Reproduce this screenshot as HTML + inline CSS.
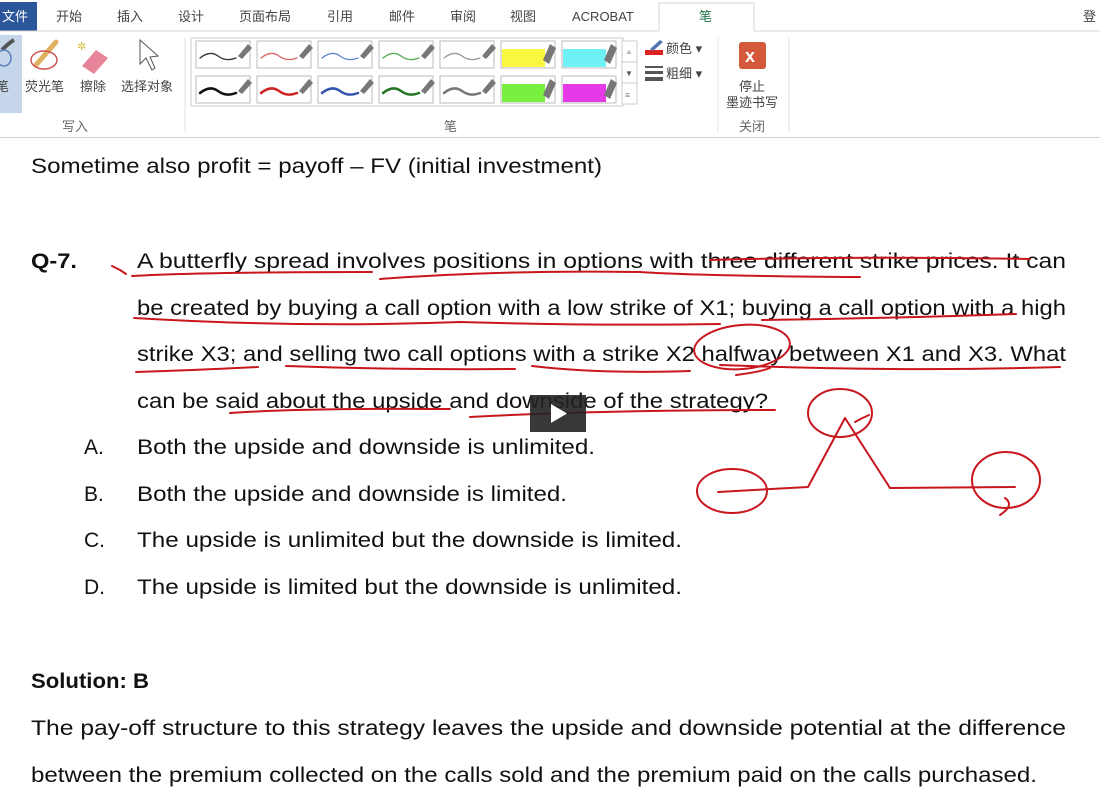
<!DOCTYPE html>
<html><head><meta charset="utf-8"><style>
html,body{margin:0;padding:0;width:1100px;height:790px;overflow:hidden;background:#fff}
svg{display:block}
.t{font-family:"Liberation Sans",sans-serif;font-size:21px;fill:#111}
.b{font-weight:bold}
.cn{font-family:"Liberation Sans","Noto Sans CJK SC",sans-serif;font-size:13px;fill:#444}
.ink{fill:none;stroke:#c8161d;stroke-width:2;stroke-linecap:round;stroke-linejoin:round}
</style></head><body>
<svg width="1100" height="790" viewBox="0 0 1100 790" xmlns="http://www.w3.org/2000/svg">
<rect x="0" y="0" width="1100" height="31" fill="#fff"/>
<rect x="0" y="2" width="37" height="29" fill="#2b579a"/>
<text x="2" y="21" class="cn" style="fill:#fff">文件</text>
<text x="56" y="21" class="cn">开始</text>
<text x="117" y="21" class="cn">插入</text>
<text x="178" y="21" class="cn">设计</text>
<text x="239" y="21" class="cn">页面布局</text>
<text x="327" y="21" class="cn">引用</text>
<text x="389" y="21" class="cn">邮件</text>
<text x="450" y="21" class="cn">审阅</text>
<text x="510" y="21" class="cn">视图</text>
<text x="572" y="21" class="cn">ACROBAT</text>
<path d="M659 31V3H754V31" fill="#fff" stroke="#d4d4d4"/>
<text x="699" y="21" class="cn" style="fill:#217346">笔</text>
<text x="1083" y="21" class="cn">登</text>
<line x1="0" y1="31" x2="659" y2="31" stroke="#d4d4d4"/>
<line x1="754" y1="31" x2="1100" y2="31" stroke="#d4d4d4"/>
<rect x="0" y="32" width="1100" height="105" fill="#fff"/>
<line x1="0" y1="137.5" x2="1100" y2="137.5" stroke="#d0d0d0"/>
<rect x="0" y="35" width="22" height="78" fill="#c5d5ea"/>
<path d="M2 50 Q10 42 14 40" stroke="#555" stroke-width="4" fill="none"/>
<ellipse cx="4" cy="58" rx="7" ry="8" fill="none" stroke="#5a7fc0" stroke-width="1.5"/>
<text x="-4" y="91" class="cn">笔</text>
<path d="M36 65 L56 42" stroke="#e0b060" stroke-width="5" stroke-linecap="round"/>
<ellipse cx="44" cy="60" rx="13" ry="9" fill="none" stroke="#c55" stroke-width="1.5"/>
<text x="25" y="91" class="cn">荧光笔</text>
<text x="77" y="50" style="font-size:11px;fill:#d8c040">✲</text>
<path d="M82 66 L96 50 L108 58 L94 74 Z" fill="#e9859a"/>
<text x="80" y="91" class="cn">擦除</text>
<path d="M140 40 L140 64 L146 58 L152 70 L155 68 L150 57 L158 56 Z" fill="#fff" stroke="#555"/>
<text x="121" y="91" class="cn">选择对象</text>
<text x="62" y="131" class="cn" style="fill:#666">写入</text>
<line x1="185" y1="38" x2="185" y2="132" stroke="#e0e0e0"/>
<rect x="191" y="38" width="432" height="68" fill="#fff" stroke="#ccc"/>
<g stroke="#bbb" fill="#fff">
<rect x="196" y="41" width="54" height="27"/><rect x="257" y="41" width="54" height="27"/><rect x="318" y="41" width="54" height="27"/><rect x="379" y="41" width="54" height="27"/><rect x="440" y="41" width="54" height="27"/>
<rect x="196" y="76" width="54" height="27"/><rect x="257" y="76" width="54" height="27"/><rect x="318" y="76" width="54" height="27"/><rect x="379" y="76" width="54" height="27"/><rect x="440" y="76" width="54" height="27"/>
<rect x="501" y="41" width="54" height="27"/><rect x="562" y="41" width="54" height="27"/><rect x="501" y="76" width="54" height="27"/><rect x="562" y="76" width="54" height="27"/>
</g>
<rect x="502" y="49" width="43" height="18" fill="#f8f840"/><rect x="563" y="49" width="43" height="18" fill="#6ff2f6"/>
<rect x="502" y="84" width="43" height="18" fill="#78f040"/><rect x="563" y="84" width="43" height="18" fill="#e63ae8"/>
<g fill="none" stroke-linecap="round">
<path d="M200 58 Q210 50 218 56 T236 58" stroke="#333" stroke-width="1.3"/>
<path d="M261 58 Q271 50 279 56 T297 58" stroke="#d66" stroke-width="1.3"/>
<path d="M322 58 Q332 50 340 56 T358 58" stroke="#68c" stroke-width="1.3"/>
<path d="M383 58 Q393 50 401 56 T419 58" stroke="#5a5" stroke-width="1.3"/>
<path d="M444 58 Q454 50 462 56 T480 58" stroke="#999" stroke-width="1.3"/>
<path d="M200 93 Q210 85 218 91 T236 93" stroke="#111" stroke-width="2.5"/>
<path d="M261 93 Q271 85 279 91 T297 93" stroke="#c22" stroke-width="2.5"/>
<path d="M322 93 Q332 85 340 91 T358 93" stroke="#35a" stroke-width="2.5"/>
<path d="M383 93 Q393 85 401 91 T419 93" stroke="#272" stroke-width="2.5"/>
<path d="M444 93 Q454 85 462 91 T480 93" stroke="#777" stroke-width="2.5"/>
</g>
<g fill="#777">
<path d="M238 56 L248 44 L252 48 L242 59 Z"/><path d="M299 56 L309 44 L313 48 L303 59 Z"/><path d="M360 56 L370 44 L374 48 L364 59 Z"/><path d="M421 56 L431 44 L435 48 L425 59 Z"/><path d="M482 56 L492 44 L496 48 L486 59 Z"/><path d="M543 60 L550 44 L556 48 L549 64 Z"/><path d="M604 60 L611 44 L617 48 L610 64 Z"/>
<path d="M238 91 L248 79 L252 83 L242 94 Z"/><path d="M299 91 L309 79 L313 83 L303 94 Z"/><path d="M360 91 L370 79 L374 83 L364 94 Z"/><path d="M421 91 L431 79 L435 83 L425 94 Z"/><path d="M482 91 L492 79 L496 83 L486 94 Z"/><path d="M543 95 L550 79 L556 83 L549 99 Z"/><path d="M604 95 L611 79 L617 83 L610 99 Z"/>
</g>
<rect x="622" y="41" width="15" height="63" fill="#fff" stroke="#ccc"/>
<line x1="622" y1="62" x2="637" y2="62" stroke="#ccc"/><line x1="622" y1="83" x2="637" y2="83" stroke="#ccc"/>
<text x="625" y="54" style="font-size:8px;fill:#bbb">▲</text><text x="625" y="76" style="font-size:8px;fill:#555">▼</text><text x="625" y="98" style="font-size:9px;fill:#555">≡</text>
<rect x="645" y="50" width="18" height="5" fill="#d22"/>
<path d="M650 49 L660 40 L663 42 L653 51 Z" fill="#5575b0"/>
<text x="666" y="53" class="cn">颜色 ▾</text>
<g fill="#555"><rect x="645" y="66" width="18" height="2"/><rect x="645" y="71" width="18" height="3"/><rect x="645" y="77" width="18" height="4"/></g>
<text x="666" y="78" class="cn">粗细 ▾</text>
<text x="444" y="131" class="cn" style="fill:#666">笔</text>
<line x1="718" y1="38" x2="718" y2="132" stroke="#e0e0e0"/>
<rect x="739" y="42" width="27" height="27" rx="3" fill="#d3593a"/>
<text x="745" y="62" style="font-family:'Liberation Sans';font-weight:bold;font-size:18px;fill:#fff">x</text>
<text x="739" y="91" class="cn">停止</text>
<text x="726" y="107" class="cn">墨迹书写</text>
<text x="739" y="131" class="cn" style="fill:#666">关闭</text>
<line x1="789" y1="38" x2="789" y2="132" stroke="#e0e0e0"/>
<g class="t">
<text x="31" y="173" textLength="571" lengthAdjust="spacingAndGlyphs">Sometime also profit = payoff – FV (initial investment)</text>
<text x="31" y="268" class="t b" textLength="46" lengthAdjust="spacingAndGlyphs">Q-7.</text>
<text x="137" y="268" textLength="929" lengthAdjust="spacingAndGlyphs">A butterfly spread involves positions in options with three different strike prices. It can</text>
<text x="137" y="315" textLength="929" lengthAdjust="spacingAndGlyphs">be created by buying a call option with a low strike of X1; buying a call option with a high</text>
<text x="137" y="361" textLength="929" lengthAdjust="spacingAndGlyphs">strike X3; and selling two call options with a strike X2 halfway between X1 and X3. What</text>
<text x="137" y="408" textLength="631" lengthAdjust="spacingAndGlyphs">can be said about the upside and downside of the strategy?</text>
<text x="84" y="454">A.</text><text x="137" y="454" textLength="458" lengthAdjust="spacingAndGlyphs">Both the upside and downside is unlimited.</text>
<text x="84" y="501">B.</text><text x="137" y="501" textLength="430" lengthAdjust="spacingAndGlyphs">Both the upside and downside is limited.</text>
<text x="84" y="547">C.</text><text x="137" y="547" textLength="545" lengthAdjust="spacingAndGlyphs">The upside is unlimited but the downside is limited.</text>
<text x="84" y="594">D.</text><text x="137" y="594" textLength="545" lengthAdjust="spacingAndGlyphs">The upside is limited but the downside is unlimited.</text>
<text x="31" y="688" class="t b" textLength="118" lengthAdjust="spacingAndGlyphs">Solution: B</text>
<text x="31" y="735" textLength="1035" lengthAdjust="spacingAndGlyphs">The pay-off structure to this strategy leaves the upside and downside potential at the difference</text>
<text x="31" y="782" textLength="1006" lengthAdjust="spacingAndGlyphs">between the premium collected on the calls sold and the premium paid on the calls purchased.</text>
</g>
<g class="ink">
<path d="M112 266 L120 270 L126 274"/>
<path d="M132 276 Q200 272 372 272"/>
<path d="M380 279 Q500 270 640 272 Q700 276 860 277"/>
<path d="M710 260 Q850 256 1030 259"/>
<path d="M134 318 Q300 328 460 322 Q600 326 720 324"/>
<path d="M762 320 Q900 318 1016 314"/>
<path d="M136 372 Q200 370 258 367"/>
<path d="M286 366 Q400 370 515 369"/>
<path d="M532 366 Q600 374 690 371"/>
<path d="M720 365 Q900 372 1060 367"/>
<ellipse cx="742" cy="347" rx="48" ry="22" transform="rotate(-5 742 347)"/>
<path d="M736 375 Q760 372 770 368"/>
<path d="M230 413 Q300 408 450 409"/>
<path d="M470 417 Q600 410 775 410"/>
<ellipse cx="840" cy="413" rx="32" ry="24"/>
<path d="M855 422 Q862 418 869 415"/>
<path d="M718 492 L808 487 L845 418 L890 488 L1015 487"/>
<ellipse cx="732" cy="491" rx="35" ry="22"/>
<ellipse cx="1006" cy="480" rx="34" ry="28"/>
<path d="M1000 515 Q1015 505 1005 498"/>
</g>
<rect x="530" y="395" width="56" height="37" fill="#222" opacity="0.9"/>
<path d="M551 404 L567 413.5 L551 423 Z" fill="#fff"/>
</svg>
</body></html>
